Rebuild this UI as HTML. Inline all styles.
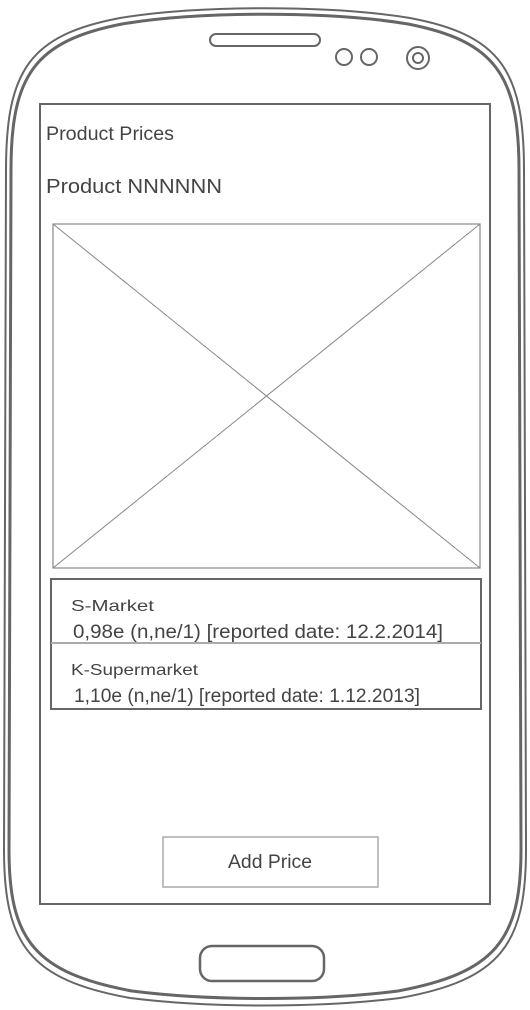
<!DOCTYPE html>
<html><head><style>
html,body{margin:0;padding:0;background:#fff;}
body{width:530px;height:1010px;position:relative;overflow:hidden;}
svg{position:absolute;left:0;top:0;}
text{font-family:"Comic Sans MS","Liberation Sans",sans-serif;fill:#444;}
</style></head><body>
<svg width="530" height="1010" viewBox="0 0 530 1010">
<g fill="none" stroke="#666" stroke-width="2">
<path d="M6 170 C6 70 30 35 120 18 C200 5 330 5 410 18 C500 35 524 70 524 170 L526 850 C526 945 500 980 400 998 C320 1008 210 1008 130 998 C30 980 4 945 4 850 Z"/>
<path d="M11 170 C11 75 35 41 122 24 C200 11 330 11 408 24 C495 41 519 75 519 170 L521 850 C521 940 495 973 398 991 C320 1001 210 1001 132 991 C35 973 9 940 9 850 Z" stroke-width="3"/>
<rect x="210" y="34" width="110" height="12" rx="6"/>
<circle cx="344" cy="57" r="8"/>
<circle cx="369" cy="57" r="8"/>
<circle cx="418" cy="58" r="11"/>
<circle cx="418" cy="58" r="5"/>
<rect x="200" y="946" width="124" height="35" rx="12" stroke-width="2.5"/>
<rect x="40" y="104" width="450" height="800"/>
<rect x="53" y="224" width="427" height="344" stroke="#888" stroke-width="1.2"/>
<line x1="53" y1="224" x2="480" y2="568" stroke="#888" stroke-width="1"/>
<line x1="480" y1="224" x2="53" y2="568" stroke="#888" stroke-width="1"/>
<rect x="51" y="579" width="430" height="130"/>
<line x1="51" y1="643" x2="481" y2="643" stroke="#aaa"/>
<rect x="163" y="837" width="215" height="50" stroke="#aaa" stroke-width="1.5"/>
</g>
<text x="46" y="140" font-size="19" textLength="128" lengthAdjust="spacingAndGlyphs">Product Prices</text>
<text x="46" y="193" font-size="20" textLength="176" lengthAdjust="spacingAndGlyphs">Product NNNNNN</text>
<text x="71" y="611" font-size="16" textLength="83" lengthAdjust="spacingAndGlyphs">S-Market</text>
<text x="73" y="638" font-size="19" textLength="370" lengthAdjust="spacingAndGlyphs">0,98e (n,ne/1) [reported date: 12.2.2014]</text>
<text x="71" y="675" font-size="16" textLength="127" lengthAdjust="spacingAndGlyphs">K-Supermarket</text>
<text x="74" y="702" font-size="19" textLength="346" lengthAdjust="spacingAndGlyphs">1,10e (n,ne/1) [reported date: 1.12.2013]</text>
<text x="228" y="868" font-size="19" textLength="84" lengthAdjust="spacingAndGlyphs">Add Price</text>
</svg>
</body></html>
